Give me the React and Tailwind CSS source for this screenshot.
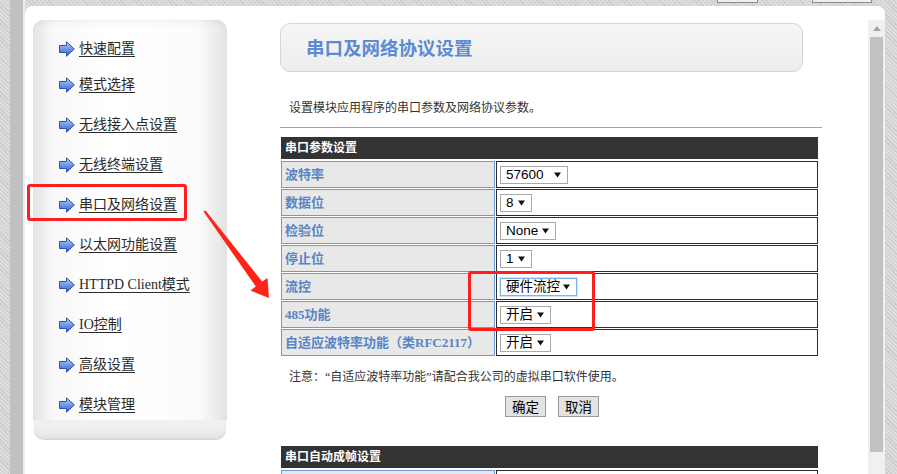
import React from 'react';

const pattern =
  'bg-[#d6d6d6] bg-[repeating-linear-gradient(45deg,#cbcbcb_0px,#cbcbcb_1px,#dddddd_1px,#dddddd_3px)]';

const cjkSerif = { fontFamily: '"Liberation Serif", "Noto Sans CJK SC", serif' };

const menu = [
  '快速配置',
  '模式选择',
  '无线接入点设置',
  '无线终端设置',
  '串口及网络设置',
  '以太网功能设置',
  'HTTPD Client模式',
  'IO控制',
  '高级设置',
  '模块管理',
];

const rows = [
  { label: '波特率', value: '57600', w: 'w-[68px]' },
  { label: '数据位', value: '8', w: 'w-[32px]' },
  { label: '检验位', value: 'None', w: 'w-[56px]' },
  { label: '停止位', value: '1', w: 'w-[32px]' },
  { label: '流控', value: '硬件流控', w: 'w-[77px]', focus: true },
  { label: '485功能', value: '开启', w: 'w-[51px]' },
  { label: '自适应波特率功能（类RFC2117）', value: '开启', w: 'w-[51px]' },
];

const ArrowIcon = () => (
  <svg width="16" height="16" viewBox="0 0 16 16" className="shrink-0">
    <defs>
      <linearGradient id="ai" x1="0" y1="0" x2="0" y2="1">
        <stop offset="0" stopColor="#b5cdf6" />
        <stop offset="0.5" stopColor="#7096e4" />
        <stop offset="1" stopColor="#3d63c9" />
      </linearGradient>
    </defs>
    <polygon
      points="0.5,4.5 7.5,4.5 7.5,0.8 15.3,8 7.5,15.2 7.5,11.5 0.5,11.5"
      fill="url(#ai)"
      stroke="#2b52ae"
      strokeWidth="1"
      strokeLinejoin="round"
    />
  </svg>
);

const Caret = () => (
  <svg width="7" height="6" viewBox="0 0 7 6" className="shrink-0">
    <path d="M0 0.5H7L3.5 5.5Z" fill="#111" />
  </svg>
);

const Select = ({ value, w, focus }) => (
  <div
    className={`flex h-[18px] items-center justify-between bg-white pl-[5px] pr-[6px] text-[13.5px] leading-none text-black ${w} ${
      focus ? 'border border-[#7eb4ea] shadow-[0_0_0_1px_#cfe3f8]' : 'border border-[#a9a9a9]'
    }`}
    style={{ fontFamily: '"Liberation Sans", "Noto Sans CJK SC", sans-serif' }}
  >
    <span>{value}</span>
    <Caret />
  </div>
);

const SectionHeader = ({ children }) => (
  <div className="flex h-[22px] w-[537px] items-center bg-[#333333] pl-[4px] text-[12px] font-bold text-white">
    {children}
  </div>
);

const Sidebar = () => (
  <div className="ml-[8px] mt-[14px] flex h-[420px] w-[194px] flex-col">
    <div className="flex-1 rounded-t-[10px] bg-[linear-gradient(to_right,#e3e3e3,#f8f8f8_10%,#ffffff_40%,#fbfbfb_85%,#e3e3e3)] shadow-[inset_0_6px_6px_-4px_rgba(0,0,0,0.06)]">
      <div className="flex flex-col gap-[20px] pt-[19px]" style={cjkSerif}>
        {menu.map((m, i) => (
          <div key={m} className={`flex h-[20px] items-center gap-[4px] pl-[26px] ${i === 0 ? 'mb-[-4px]' : ''}`}>
            <ArrowIcon />
            <span className="text-[14px] leading-none text-[#2a2a2a] underline underline-offset-[3px]">{m}</span>
          </div>
        ))}
      </div>
    </div>
    <div className="mx-[1px] h-[20px] rounded-b-[10px] border-b border-[#d4d4d4] bg-[linear-gradient(to_bottom,#f1f1f1,#e9e9e9)] shadow-[inset_0_-2px_3px_rgba(0,0,0,0.05)]" />
  </div>
);

const Content = () => (
  <div className="ml-[53px] flex w-[542px] flex-col" style={cjkSerif}>
    <div className="mt-[17px] flex h-[49px] w-[523px] items-center rounded-[10px] border border-[#d6d6d6] bg-[linear-gradient(to_bottom,#f6f6f6,#ededed)] pl-[25px]">
      <span
        className="text-[18.5px] font-bold text-[#5a8bd3]"
        style={{ fontFamily: '"Noto Sans CJK SC", sans-serif' }}
      >
        串口及网络协议设置
      </span>
    </div>
    <p className="mt-[28px] h-[16px] pl-[9px] text-[12px] leading-[16px] text-[#333]">
      设置模块应用程序的串口参数及网络协议参数。
    </p>
    <div className="mt-[11px] h-px bg-[#a5a5a5]" />

    <div className="ml-px mt-[9px]">
      <SectionHeader>串口参数设置</SectionHeader>
      <div className="mt-[2px] grid w-[537px] grid-cols-[214px_322px] gap-[1px]">
        {rows.map((r) => (
          <React.Fragment key={r.label}>
            <div className="flex h-[27px] items-center border border-[#6d9bd1] bg-[#e8e8e8] pl-[3px] text-[13px] font-bold text-[#5784c4]">
              {r.label}
            </div>
            <div className="flex h-[27px] items-center border border-[#2d2d2d] bg-white pl-[3px]">
              <Select value={r.value} w={r.w} focus={r.focus} />
            </div>
          </React.Fragment>
        ))}
      </div>
    </div>

    <p className="mt-[13px] h-[16px] pl-[9px] text-[12px] leading-[16px] text-[#333]">
      注意：“自适应波特率功能”请配合我公司的虚拟串口软件使用。
    </p>
    <div className="mt-[11px] flex justify-center gap-[12px] pl-[2px]">
      {['确定', '取消'].map((b) => (
        <div
          key={b}
          className="flex h-[21px] w-[41px] items-center justify-center border border-[#9a9a9a] bg-[#e3e3e3] text-[13.5px] text-black"
          style={{ fontFamily: '"Noto Sans CJK SC", sans-serif' }}
        >
          {b}
        </div>
      ))}
    </div>

    <div className="ml-px mt-[29px]">
      <SectionHeader>串口自动成帧设置</SectionHeader>
      <div className="mt-[2px] grid w-[537px] grid-cols-[214px_322px] gap-[1px]">
        <div className="h-[27px] border border-[#6d9bd1] bg-[#e8e8e8]" />
        <div className="h-[27px] border border-[#2d2d2d] bg-white" />
      </div>
    </div>
  </div>
);

const Scrollbar = () => (
  <div className="ml-auto mt-[14px] flex w-[17px] flex-col bg-[#f0f0f0]">
    <div className="flex h-[17px] items-center justify-center">
      <svg width="8" height="5" viewBox="0 0 8 5">
        <path d="M0 5L4 0L8 5Z" fill="#a3a3a3" />
      </svg>
    </div>
    <div className="mx-[2px] h-[415px] bg-[#c1c1c1]" />
  </div>
);

export default function App() {
  return (
    <div className={`relative flex h-[474px] w-[897px] overflow-hidden ${pattern}`}>
      {/* left frame strip */}
      <div className="w-[10px] shrink-0" />
      <div className="w-[13px] shrink-0 bg-[#c1c1c1]" />
      <div className="w-[2px] shrink-0 bg-[#ececec]" />

      <div className="flex flex-1 flex-col">
        {/* top strip with cut-off buttons */}
        <div className="flex h-[6px] shrink-0 items-start">
          <div className="ml-[692px] h-[3px] w-[41px] border border-t-0 border-[#8c8c8c] bg-[#efefef]" />
          <div className="ml-[54px] h-[3px] w-[60px] border border-t-0 border-[#8c8c8c] bg-[#efefef]" />
        </div>

        <div className="flex flex-1">
          <div className="flex w-[860px] rounded-t-[8px] bg-white">
            <Sidebar />
            <Content />
            <Scrollbar />
          </div>
        </div>
      </div>

      {/* annotations */}
      <div className="absolute left-[27px] top-[184px] h-[37px] w-[160px] rounded-[3px] border-[3px] border-[#ff1f1f]" />
      <div className="absolute left-[468px] top-[271px] h-[60px] w-[127px] rounded-[3px] border-[3px] border-[#ff1f1f]" />
      <svg className="pointer-events-none absolute left-0 top-0" width="897" height="474">
        <polygon
          points="203.5,211.5 205.5,210.5 262.2,281.6 267.5,278 269,298 250.5,290.5 255.8,286.4"
          fill="#ff2418"
        />
      </svg>
    </div>
  );
}
